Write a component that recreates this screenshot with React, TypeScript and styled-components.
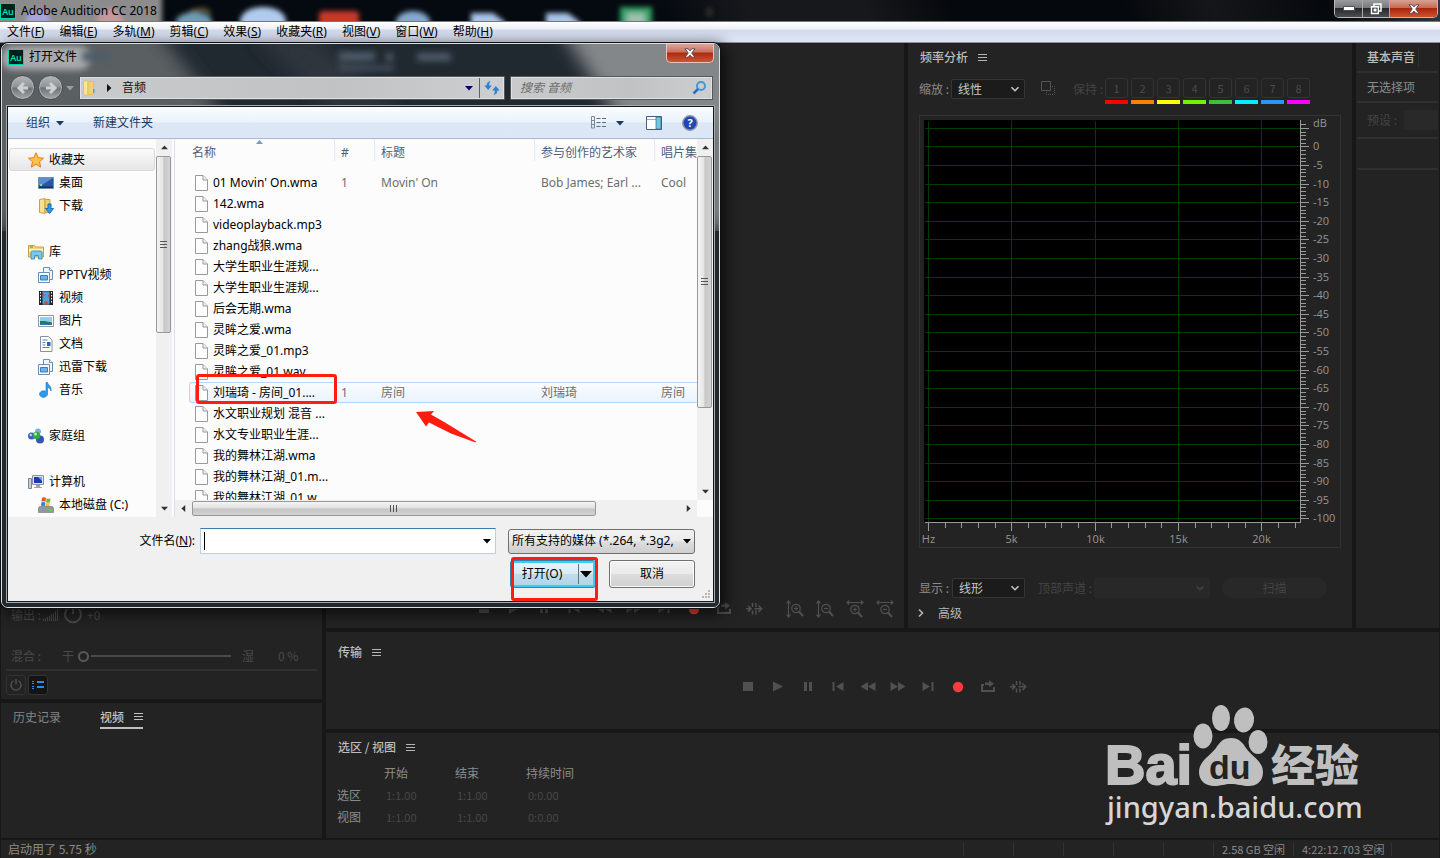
import React from "react";
import styled, { createGlobalStyle, css } from "styled-components";

const winFont = '"Noto Sans", "Noto Sans CJK SC", sans-serif';
const appFont = '"Noto Sans CJK SC", sans-serif';

const Global = createGlobalStyle`
  * { box-sizing: border-box; }
  body { margin: 0; background: #171717; font-family: ${winFont}; font-size: 12px; line-height: 16px; }
  button, input, select { font: inherit; color: inherit; margin: 0; padding: 0; border: 0; background: none; border-radius: 0; }
  svg { display: block; flex: none; }
`;

/* ---------- application shell ---------- */
const Shell = styled.div`
  position: relative;
  display: flex;
  flex-direction: column;
  min-height: 100vh;
  overflow: hidden;
`;
const TitleBar = styled.header`
  position: relative;
  z-index: 0;
  display: flex;
  align-items: center;
  height: 21px;
  gap: 5px;
  flex: none;
  overflow: hidden;
  color: #000;
  background: linear-gradient(65deg, #050a10 46%, #16181c 52% 60%, #05080c 66% 78%, #14161a 84%, #05080c 92%, #34373a);
`;
const Backdrop = styled.svg`
  position: absolute;
  left: 0;
  top: 0;
  z-index: -1;
`;
const AppTitle = styled.h1`
  margin: 0;
  font-size: 12px;
  font-weight: 400;
  flex: 1;
`;
const WindowButtons = styled.div`
  display: flex;
  align-self: flex-start;
  height: 18px;
  margin-right: 2px;
  border: 1px solid #b8b8b8;
  border-top: 0;
  border-radius: 0 0 5px 5px;
  overflow: hidden;
`;
const WindowButton = styled.button<{ $w: number; $close?: boolean }>`
  width: ${(p) => p.$w}px;
  display: flex;
  align-items: center;
  justify-content: center;
  border-right: ${(p) => (p.$close ? 0 : "1px solid #a9a9a9")};
  background: ${(p) =>
    p.$close
      ? "linear-gradient(#d9a293, #c56a55 45%, #a8260c 50%, #cf5230)"
      : "linear-gradient(#9a9b9c, #77797a 45%, #26292c 50%, #4c4f52)"};
`;
const MenuBar = styled.nav`
  display: flex;
  gap: 15px;
  height: 22px;
  padding: 0 7px;
  flex: none;
  border-top: 1px solid #777;
  border-bottom: 1px solid #8d92a3;
  background: linear-gradient(#fff, #eef1f8 35%, #d3daec 40%, #dfe6f6);
`;
const MenuItem = styled.button`
  white-space: nowrap;
  color: #000;
`;

const Workspace = styled.main`
  display: flex;
  flex: 1;
  gap: 4px;
  padding: 0 1px;
  font-family: ${appFont};
  color: #9b9b9b;
`;
const Stack = styled.div<{ $w?: number }>`
  display: flex;
  flex-direction: column;
  gap: 4px;
  ${(p) => (p.$w ? css`width: ${p.$w}px; flex: none;` : css`flex: 1; min-width: 0;`)}
`;
const TopRow = styled.div`
  display: flex;
  flex: 1;
  gap: 4px;
`;
const Panel = styled.section<{ $w?: number; $h?: number; $end?: boolean }>`
  display: flex;
  flex-direction: column;
  justify-content: ${(p) => (p.$end ? "flex-end" : "flex-start")};
  background: #232323;
  min-width: 0;
  ${(p) => (p.$w ? css`width: ${p.$w}px; flex: none;` : p.$h ? css`min-height: ${p.$h}px; flex: none;` : css`flex: 1;`)}
`;
const PanelHead = styled.div<{ $h?: number }>`
  display: flex;
  align-items: center;
  gap: 9px;
  height: ${(p) => p.$h ?? 28}px;
  padding-left: 12px;
  flex: none;
`;
const PanelTitle = styled.h2`
  margin: 0;
  font-size: 12px;
  font-weight: 500;
  color: #bdbdbd;
  white-space: nowrap;
`;
const IconButton = styled.button`
  display: flex;
  align-items: center;
  justify-content: center;
  width: 10px;
  height: 20px;
  color: #b5b5b5;
`;
const TransportRow = styled.div<{ $right?: boolean }>`
  display: flex;
  justify-content: ${(p) => (p.$right ? "flex-end" : "center")};
  color: #505050;
  ${(p) => (p.$right ? css`padding: 0 4px 9px 0;` : css`padding-top: 5px;`)}
`;
const TransportButton = styled.button<{ $rec?: boolean; $gap?: boolean }>`
  display: flex;
  align-items: center;
  justify-content: center;
  width: 30px;
  height: 20px;
  margin-left: ${(p) => (p.$gap ? 11 : 0)}px;
  color: ${(p) => (p.$rec ? "#fb3b3b" : "inherit")};
`;

/* effects rack */
const RackRow = styled.div<{ $h: number }>`
  display: flex;
  align-items: center;
  height: ${(p) => p.$h}px;
  padding-left: 10px;
  color: #4a4a4a;
  font-size: 12px;
`;
const RackLabel = styled.span<{ $w: number }>`
  width: ${(p) => p.$w}px;
  flex: none;
  white-space: nowrap;
`;
const MixSlider = styled.input`
  appearance: none;
  width: 154px;
  height: 12px;
  margin: 0 10px 0 4px;
  background: linear-gradient(#4a4a4a, #4a4a4a) 13px 5px / 140px 2px no-repeat;
  &::-webkit-slider-thumb {
    appearance: none;
    width: 11px;
    height: 11px;
    border: 2px solid #585858;
    border-radius: 50%;
    background: #232323;
  }
`;
const RackFooter = styled.div`
  display: flex;
  gap: 2px;
  margin: 0 5px;
  padding: 4px 0;
  border-top: 2px solid #303030;
`;
const SquareButton = styled.button<{ $on?: boolean }>`
  width: 20px;
  height: 20px;
  display: flex;
  align-items: center;
  justify-content: center;
  border: 1px solid #343434;
  border-radius: 3px;
  background: ${(p) => (p.$on ? "#141414" : "#232323")};
  color: ${(p) => (p.$on ? "#2d8ceb" : "#555")};
`;
const Tabs = styled.div`
  display: flex;
  gap: 39px;
  padding: 3px 12px;
`;
const Tab = styled.button<{ $active?: boolean }>`
  display: flex;
  align-items: center;
  gap: 10px;
  height: 23px;
  color: ${(p) => (p.$active ? "#c4c4c4" : "#858585")};
  font-weight: ${(p) => (p.$active ? 500 : 400)};
  border-bottom: 2px solid ${(p) => (p.$active ? "#c0c0c0" : "transparent")};
`;

/* frequency analysis */
const ControlRow = styled.div<{ $h: number }>`
  display: flex;
  align-items: center;
  height: ${(p) => p.$h}px;
  padding-left: 11px;
  color: #8b8b8b;
  flex: none;
`;
const ControlLabel = styled.label<{ $w: number; $off?: boolean; $ml?: number }>`
  width: ${(p) => p.$w}px;
  margin-left: ${(p) => p.$ml ?? 0}px;
  flex: none;
  white-space: nowrap;
  color: ${(p) => (p.$off ? "#444" : "#8b8b8b")};
`;
const Dropdown = styled.div<{ $w: number; $off?: boolean }>`
  display: grid;
  align-items: center;
  width: ${(p) => p.$w}px;
  height: 20px;
  border: 1px solid ${(p) => (p.$off ? "#282828" : "#353535")};
  border-radius: 2px;
  background: ${(p) => (p.$off ? "#282828" : "#1b1b1b")};
  color: ${(p) => (p.$off ? "#444" : "#c6c6c6")};
  & > * { grid-area: 1 / 1; }
  & > svg { justify-self: end; margin-right: 4px; pointer-events: none; }
`;
const DarkSelect = styled.select`
  appearance: none;
  width: 100%;
  height: 18px;
  padding-left: 6px;
  color: inherit;
  opacity: 1;
`;
const Holds = styled.div`
  display: flex;
  gap: 3px;
`;
const HoldButton = styled.button<{ $c: string }>`
  display: flex;
  flex-direction: column;
  gap: 2px;
  width: 23px;
  margin-top: 5px;
  color: #4a4a4a;
  font-size: 11px;
  line-height: 18px;
  & > span { border: 1px solid #333; border-radius: 3px; width: 23px; height: 20px; }
  &::after { content: ""; height: 4px; width: 23px; background: ${(p) => p.$c}; }
`;
const Chart = styled.svg`
  margin: 9px 0 0 11px;
  font-family: "Open Sans", sans-serif;
  font-size: 11px;
`;
const ScanButton = styled.button`
  width: 105px;
  height: 20px;
  margin-left: 12px;
  border-radius: 10px;
  background: #282828;
  color: #444;
`;
const Expander = styled.button`
  display: flex;
  align-items: center;
  gap: 12px;
  height: 30px;
  padding-left: 8px;
  color: #b5b5b5;
`;
const Spacer = styled.div`
  flex: 1;
`;

/* essential sound */
const SoundRow = styled.div<{ $h: number; $off?: boolean }>`
  display: flex;
  align-items: center;
  height: ${(p) => p.$h}px;
  padding-left: 10px;
  margin: 0 1px;
  flex: none;
  border-bottom: 2px solid #303030;
  color: ${(p) => (p.$off ? "#444" : "#8b8b8b")};
  overflow: hidden;
  white-space: nowrap;
`;
const SoundTab = styled(PanelTitle)`
  padding: 2px 3px 2px 0;
  border-right: 1px solid #303030;
`;
const PresetSelect = styled.select`
  appearance: none;
  flex: 1;
  height: 20px;
  margin-left: 7px;
  background: #292929;
  opacity: 1;
`;

/* selection table */
const RangeTable = styled.table`
  border-collapse: collapse;
  table-layout: fixed;
  width: 300px;
  margin-left: 11px;
  font-size: 11px;
  th { padding: 1px 0 0; height: 22px; text-align: left; font-weight: 400; font-size: 12px; color: #8b8b8b; }
  td { padding: 2px 0 0 2px; color: #484848; }
`;
const StatusBar = styled.footer`
  display: flex;
  align-items: center;
  height: 20px;
  margin: 0 1px;
  padding-left: 7px;
  border-top: 2px solid #171717;
  background: #232323;
  color: #8b8b8b;
  font-family: ${appFont};
  flex: none;
`;
const StatusText = styled.span`
  flex: 1;
`;
const StatusCell = styled.span<{ $w: number }>`
  width: ${(p) => p.$w}px;
  height: 13px;
  padding-left: 8px;
  border-left: 1px solid #333;
  font-size: 11px;
  line-height: 13px;
  white-space: nowrap;
`;

/* ---------- open dialog ---------- */
const Dialog = styled.div`
  position: absolute;
  left: 1px;
  top: 43px;
  width: 719px;
  height: 565px;
  display: flex;
  flex-direction: column;
  padding: 0 5px 5px;
  border: 1px solid #dcdfe2;
  border-radius: 7px;
  overflow: hidden;
  background: #202830;
`;
const DialogShade = styled.div`
  position: absolute;
  left: 1px;
  top: 43px;
  width: 719px;
  height: 565px;
  border-radius: 7px;
  box-shadow: 0 0 0 1px #111, 3px 3px 14px 3px rgba(0, 0, 0, 0.6);
`;
const Glass = styled.svg`
  position: absolute;
  left: 0;
  top: 0;
`;
const DialogTitle = styled.div`
  position: relative;
  display: flex;
  align-items: flex-start;
  height: 31px;
  gap: 5px;
  flex: none;
  color: #000;
  & > svg { margin: 5px 0 0 1px; }
`;
const DialogName = styled.h2`
  margin: 0;
  padding-top: 5px;
  font-size: 12px;
  font-weight: 400;
  flex: 1;
`;
const CloseButton = styled.button`
  display: flex;
  align-items: center;
  justify-content: center;
  width: 48px;
  height: 19px;
  border: 1px solid #e3c4bd;
  border-top: 0;
  border-radius: 0 0 5px 5px;
  background: linear-gradient(#dba79b, #c9705c 45%, #ab2a10 50%, #cc5637);
`;
const AddressRow = styled.div`
  position: relative;
  display: flex;
  align-items: center;
  gap: 5px;
  height: 25px;
  flex: none;
  padding: 0 1px 0 3px;
`;
const BackForward = styled.div`
  display: flex;
  align-items: center;
  gap: 3px;
  width: 64px;
  flex: none;
`;
const RoundButton = styled.button`
  width: 25px;
  height: 25px;
  display: flex;
  align-items: center;
  justify-content: center;
  border: 1px solid #4c5055;
  border-radius: 50%;
  background: linear-gradient(#b4b7ba, #8f9397 48%, #6d7277 52%, #a4a8ab);
  box-shadow: inset 0 0 0 1px #aeb2b5;
`;
const AddressBox = styled.div<{ $w?: number }>`
  display: flex;
  align-items: center;
  height: 24px;
  border: 1px solid #55585b;
  outline: 1px solid #e0e1e2;
  outline-offset: -2px;
  background: linear-gradient(90deg, #c9cacb, #c0c2c3 60%, #cdcecf);
  ${(p) => (p.$w ? css`width: ${p.$w}px; flex: none;` : css`flex: 1;`)}
  color: #111;
`;
const CrumbButton = styled.button`
  flex: 1;
  text-align: left;
  padding-left: 9px;
`;
const RefreshButton = styled.button`
  width: 25px;
  height: 22px;
  display: flex;
  align-items: center;
  justify-content: center;
  margin-left: 6px;
  border-left: 1px solid #5e6164;
`;
const SearchInput = styled.input`
  flex: 1;
  min-width: 0;
  padding-left: 9px;
  outline: 0;
  &::placeholder { color: #6a6c6e; font-style: italic; opacity: 1; }
`;
const Client = styled.div`
  position: relative;
  display: flex;
  flex-direction: column;
  flex: 1;
  margin-top: 6px;
  border: 1px solid #15181b;
  outline: 1px solid #a5a9ac;
  background: #f0f0f0;
  color: #000;
`;
const Toolbar = styled.div`
  display: flex;
  align-items: center;
  height: 32px;
  padding: 0 15px 0 18px;
  border-bottom: 1px solid #a9b9d3;
  background: linear-gradient(#fafdff, #eaf2fb 48%, #dce6f4 52%, #dde8f6);
  color: #1e395b;
  flex: none;
`;
const ToolButton = styled.button<{ $ml?: number }>`
  display: flex;
  align-items: center;
  gap: 6px;
  margin-left: ${(p) => p.$ml ?? 0}px;
`;
const Browser = styled.div`
  display: flex;
  height: 378px;
  flex: none;
  background: #fcfcfc;
`;
const Tree = styled.ul`
  list-style: none;
  margin: 0;
  padding: 9px 0 0 1px;
  width: 148px;
  flex: none;
  overflow: hidden;
`;
const TreeItem = styled.li`
  height: 23px;
`;
const TreeButton = styled.button<{ $level: number; $sel?: boolean }>`
  display: flex;
  align-items: center;
  gap: 5px;
  width: 146px;
  height: 23px;
  padding-left: ${(p) => (p.$level ? 28 : 18)}px;
  border: 1px solid ${(p) => (p.$sel ? "#d9d9d9" : "transparent")};
  border-radius: 3px;
  background: ${(p) => (p.$sel ? "linear-gradient(#fafafa, #e6e6e6)" : "none")};
  white-space: nowrap;
`;
const ScrollTrack = styled.div<{ $h?: boolean }>`
  display: flex;
  flex-direction: ${(p) => (p.$h ? "row" : "column")};
  justify-content: space-between;
  background: #f0f0f0;
  flex: none;
  ${(p) => (p.$h ? css`height: 17px; width: 522px;` : css`width: 16px;`)}
`;
const ScrollArrow = styled.button`
  display: flex;
  align-items: center;
  justify-content: center;
  width: 17px;
  height: 17px;
  color: #333;
`;
const ScrollThumb = styled.div<{ $size: number; $h?: boolean }>`
  display: flex;
  align-items: center;
  justify-content: center;
  border: 1px solid #989898;
  border-radius: 2px;
  color: #555;
  margin-right: auto;
  ${(p) =>
    p.$h
      ? css`width: ${p.$size}px; height: 15px; margin-top: 1px; background: linear-gradient(#f5f5f5, #e0e0e0 48%, #c4c4c4 52%, #d2d2d2);`
      : css`height: ${p.$size}px; width: 15px; margin-bottom: auto; background: linear-gradient(90deg, #f5f5f5, #e3e3e3 48%, #c6c6c6 52%, #d4d4d4);`}
`;
const FileArea = styled.div`
  display: flex;
  flex-direction: column;
  flex: 1;
  min-width: 0;
  margin-left: 2px;
  border-left: 1px solid #d5e1f2;
`;
const FileRow = styled.div`
  display: flex;
  height: 361px;
  flex: none;
`;
const FileScroll = styled.div`
  flex: 1;
  min-width: 0;
  padding-left: 14px;
  overflow: hidden;
`;
const FileTable = styled.table`
  width: 560px;
  table-layout: fixed;
  border-collapse: separate;
  border-spacing: 0;
  white-space: nowrap;
`;
const HeadCell = styled.th`
  height: 33px;
  padding: 0;
  vertical-align: top;
  text-align: left;
  font-weight: 400;
  color: #4c607a;
`;
const HeadLabel = styled.div<{ $first?: boolean; $last?: boolean }>`
  height: 22px;
  padding: 6px 0 0 ${(p) => (p.$first ? 3 : 6)}px;
  border-right: 1px solid ${(p) => (p.$last ? "transparent" : "#dfe9f6")};
`;
const SortMark = styled.svg`
  position: absolute;
  left: 248px;
  top: 33px;
`;
const FileTr = styled.tr<{ $hot?: boolean }>`
  td {
    height: 21px;
    padding: 0 0 0 6px;
    color: #6d6d6d;
    border: solid transparent;
    border-width: 1px 0;
    ${(p) => p.$hot && css`border-color: #b8d6fb; background: linear-gradient(#fafcff, #ebf3fd);`}
  }
  td:first-child {
    color: #000;
    ${(p) => p.$hot && css`box-shadow: inset 1px 0 #b8d6fb; border-radius: 3px 0 0 3px;`}
  }
`;
const FileName = styled.span`
  display: flex;
  align-items: center;
  gap: 5px;
  height: 19px;
  width: 140px;
`;
const Footer = styled.div`
  display: flex;
  flex-direction: column;
  gap: 6px;
  padding: 11px 18px 0 0;
  align-items: flex-end;
`;
const FooterRow = styled.div`
  display: flex;
  align-items: center;
`;
const Combo = styled.div`
  display: flex;
  align-items: center;
  width: 296px;
  height: 26px;
  margin: 0 12px 0 5px;
  padding-right: 4px;
  border: 1px solid #b4d2e6;
  border-top-color: #3d7bad;
  background: #fff;
`;
const Caret = styled.span`
  width: 1px;
  height: 18px;
  margin-left: 3px;
  background: #000;
`;
const NameInput = styled.input`
  flex: 1;
  min-width: 0;
  outline: 0;
`;
const TypeBox = styled.div`
  display: grid;
  align-items: center;
  width: 187px;
  height: 25px;
  border: 1px solid #707070;
  border-radius: 3px;
  background: linear-gradient(#f2f2f2, #ebebeb 48%, #dddddd 52%, #cfcfcf);
  & > * { grid-area: 1 / 1; }
  & > svg { justify-self: end; margin-right: 3px; pointer-events: none; }
`;
const TypeSelect = styled.select`
  appearance: none;
  width: 100%;
  height: 23px;
  padding: 0 20px 0 3px;
`;
const DialogButton = styled.button`
  width: 86px;
  height: 28px;
  margin-left: 13px;
  border: 1px solid #707070;
  border-radius: 3px;
  box-shadow: inset 0 0 0 1px #fbfbfb;
  background: linear-gradient(#f2f2f2, #ebebeb 48%, #dddddd 52%, #cfcfcf);
`;
const SplitButton = styled.div`
  display: flex;
  width: 86px;
  height: 28px;
  border: 1px solid #2c84ad;
  border-radius: 3px;
  box-shadow: inset 0 0 0 2px #39cdf5;
  background: linear-gradient(#eaf6fb, #d8ebf4 48%, #bfdcea 52%, #b2d4e6);
`;
const OpenButton = styled.button`
  flex: 1;
  padding-right: 5px;
`;
const OpenMore = styled.button`
  display: flex;
  align-items: center;
  justify-content: center;
  width: 17px;
  margin: 3px 0;
  padding-right: 2px;
  border-left: 1px solid #60747e;
`;
const Grip = styled.svg`
  position: absolute;
  right: 2px;
  bottom: 2px;
`;
const Marker = styled.div<{ $x: number; $y: number; $w: number; $h: number }>`
  position: absolute;
  left: ${(p) => p.$x}px;
  top: ${(p) => p.$y}px;
  width: ${(p) => p.$w}px;
  height: ${(p) => p.$h}px;
  border: 3px solid #ff1d12;
  border-radius: 3px;
  pointer-events: none;
`;
const ArrowMark = styled.svg`
  position: absolute;
  left: 408px;
  top: 304px;
  pointer-events: none;
`;
const Watermark = styled.svg`
  position: absolute;
  right: 74px;
  bottom: 28px;
  pointer-events: none;
`;

/* ---------- icons ---------- */
const AuLogo = () => (
  <svg width="16" height="16" viewBox="0 0 16 16">
    <rect x="0.5" y="0.5" width="15" height="15" fill="#00201c" stroke="#00d6b0" />
    <text x="8" y="12" textAnchor="middle" fontFamily="Open Sans, sans-serif" fontSize="9" fontWeight="600" fill="#00e4bb">Au</text>
  </svg>
);
const Burger = () => (
  <svg width="9" height="7" viewBox="0 0 9 7" fill="currentColor"><path d="M0 0h9v1H0zM0 3h9v1H0zM0 6h9v1H0z" /></svg>
);
const Triangle = ({ w = 7, dir = "down", fill = "currentColor" }: { w?: number; dir?: string; fill?: string }) => {
  const turn: Record<string, number> = { down: 0, left: 90, up: 180, right: 270 };
  return (
    <svg width={w} height={w} viewBox="0 0 8 8" fill={fill}><path transform={`rotate(${turn[dir]} 4 4)`} d="M0 2h8L4 6.4z" /></svg>
  );
};
const CloseGlyph = () => (
  <svg width="12" height="10" viewBox="0 0 12 10">
    <path d="M1 .8h3.2L6 2.9 7.800 .8H11L7.700 5 11 9.200H7.800L6 7.100 4.200 9.200H1L4.300 5z" fill="#fff" stroke="#5a4a52" />
  </svg>
);
const Chevron = ({ right }: { right?: boolean }) => (
  <svg width="10" height="10" viewBox="0 0 10 10" fill="none" stroke="currentColor" strokeWidth="1.600">
    <path d={right ? "M3 1.500 6.500 5 3 8.500" : "M1.500 3.200 5 6.700 8.500 3.200"} />
  </svg>
);
const Grips = ({ h }: { h?: boolean }) => (
  <svg width="8" height="8" viewBox="0 0 8 8" fill="currentColor">
    <path d={h ? "M0 0h1v7H0zM3 0h1v7H3zM6 0h1v7H6z" : "M0 0h7v1H0zM0 3h7v1H0zM0 6h7v1H0z"} />
  </svg>
);
const FileIcon = () => (
  <svg width="13" height="16" viewBox="0 0 13 16">
    <path d="M.5.5h7.500l4.500 4.500v10.500H.5z" fill="#fdfdfd" stroke="#999" />
    <path d="M8 .5V5h4.500" fill="#f0f0f0" stroke="#999" />
  </svg>
);

const transportShapes: Record<string, React.ReactNode> = {
  stop: <path d="M4 4h10v9H4z" />,
  play: <path d="M4 3.500 14 8.500 4 13.500z" />,
  pause: <path d="M5 4h3v9H5zM10 4h3v9h-3z" />,
  prev: <path d="M3.500 4h2v9h-2zM14.500 4v9L7 8.500z" />,
  rewind: <path d="M9 4v9L1.500 8.500zM16.500 4v9L9 8.500z" />,
  forward: <path d="M1.500 4v9L9 8.500zM9 4v9l7.500-4.500z" />,
  next: <path d="M3.500 4v9L11 8.500zM12.500 4h2v9h-2z" />,
  record: <circle cx="9" cy="9" r="5.200" />,
  loop: <path d="M2 6h3v2H4v4h10V9h2v5H2zM6 4.500h4V2l5 3.700-5 3.600V7H6z" />,
  skip: (
    <g fill="none" stroke="currentColor" strokeWidth="1.500">
      <path d="M1 8.800h4M3.200 6 6 8.800 3.200 11.600" />
      <path d="M7.500 3v4M7.500 10.500v4M11 3v4M11 10.500v4" />
      <path d="M9.500 8.800h7M13.500 5.500l3.200 3.300-3.200 3.300" />
    </g>
  ),
};
const zoomShape = (plus: boolean, horizontal: boolean) => (
  <g fill="none" stroke="currentColor" strokeWidth="1.200">
    {horizontal ? (
      <path d="M1 2.500h16M3.200.5 1 2.500l2.200 2M14.800.5l2.200 2-2.200 2" />
    ) : (
      <path d="M2.500 1v16M.5 3.500l2-2.500 2 2.500M.5 14.500l2 2.500 2-2.500" />
    )}
    <g transform={horizontal ? "translate(-1 2)" : "translate(0 1)"}>
      <circle cx="10" cy="7.500" r="4.200" />
      <path d={plus ? "M8 7.500h4M10 5.500v4" : "M8 7.500h4"} />
      <path d="m13 10.500 4 4.500" strokeWidth="2" />
    </g>
  </g>
);
const transportNames = ["stop", "play", "pause", "prev", "rewind", "forward", "next", "record", "loop", "skip"];

const Transport = ({ zoom }: { zoom?: boolean }) => (
  <TransportRow $right={zoom}>
    {transportNames.map((n) => (
      <TransportButton key={n} $rec={n === "record"} aria-label={n}>
        <svg width="18" height="18" viewBox="0 0 18 18" fill="currentColor">{transportShapes[n]}</svg>
      </TransportButton>
    ))}
    {zoom &&
      [0, 1, 2, 3].map((i) => (
        <TransportButton key={i} $gap={i === 0} aria-label={`zoom ${i}`}>
          <svg width="18" height="18" viewBox="0 0 18 18">{zoomShape(i % 2 === 0, i > 1)}</svg>
        </TransportButton>
      ))}
  </TransportRow>
);

const library = (
  <>
    <path d="M5.500.5h6l3 3v9h-9z" fill="#eef5fb" stroke="#6a8fb5" />
    <path d="M11.500.5v3h3" fill="#fff" stroke="#6a8fb5" />
    <path d="M.5 5.500h11v10H.5z" fill="#f5fafe" stroke="#6a8fb5" />
    <path d="M2.500 8.500h7v4.500h-7z" fill="#6fb1e6" stroke="#3a7cc0" />
  </>
);
const treeIcons: Record<string, React.ReactNode> = {
  star: <path d="m8 .8 2.200 4.900 5.300.5-4 3.600 1.200 5.300L8 12.300l-4.700 2.800 1.200-5.300-4-3.600 5.300-.5z" fill="#ffc04a" stroke="#e07b1c" />,
  desktop: (
    <>
      <path d="M.5 2.500h15v11H.5z" fill="#2857a8" stroke="#6f8fae" />
      <path d="M1 3h14L4 10H1z" fill="#5a8ed2" />
      <path d="M1 11.500h14V13H1z" fill="#1d2f4d" />
      <path d="M2 9h2v2H2z" fill="#7fdc7a" />
    </>
  ),
  download: (
    <>
      <path d="M1.500 1.500 7 .5v15l-5.500-1z" fill="#f7e08f" stroke="#c8a144" />
      <path d="M7 1.500h5v13H7z" fill="#f0cf6c" stroke="#c8a144" />
      <path d="M10 6h3v4.500h2.500L11.500 15.500 7.500 10.500H10z" fill="#2f9be8" stroke="#1a68b0" />
    </>
  ),
  libraries: (
    <>
      <path d="M.5 1.500h6l1 1.500h8v10H.5z" fill="#f2d475" stroke="#c8a144" />
      <path d="M1 5h14v3H1z" fill="#fdf2bd" />
      <path d="M3 15V8.500q0-1.500 1.500-1.500h8q1.500 0 1.500 1.500V15h-3.500v-3.500h-4V15z" fill="#7cc7ec" stroke="#4294c4" />
      <path d="M2 2.500h3v1H2z" fill="#37a637" />
    </>
  ),
  library,
  video: (
    <>
      <path d="M1 1h14v14H1z" fill="#20262c" />
      <path d="M4.500 1.500h7v13h-7z" fill="#4f9fe0" />
      <path d="m4.500 3 2.500 2-2.500 2.500zM11.500 3v5L9.500 6zM5 14.500l3-4 3.500 4z" fill="#b9533b" />
      <path d="M2 2h1v1.500H2zM2 5h1v1.500H2zM2 8h1v1.500H2zM2 11h1v1.500H2zM13 2h1v1.500h-1zM13 5h1v1.500h-1zM13 8h1v1.500h-1zM13 11h1v1.500h-1z" fill="#fff" />
    </>
  ),
  picture: (
    <>
      <path d="M.5 2.500h15v11H.5z" fill="#fff" stroke="#8a98a5" />
      <path d="M2 4h12v8H2z" fill="#8fd0f2" />
      <path d="M2 8 7 8l7 1.500V12H2z" fill="#217a5c" />
      <path d="M2 10.500h12V12H2z" fill="#2d6fb5" />
    </>
  ),
  doc: (
    <>
      <path d="M2.500.5h8l3.500 3.500v11.500H2.500z" fill="#fff" stroke="#8793a3" />
      <path d="M4.500 4h5M4.500 6.500h3M4.500 9h3M4.500 11.500h7" stroke="#5b7fb5" />
      <path d="M9 6h3.500v4H9z" fill="#2a62b8" />
    </>
  ),
  music: <path d="M8 .5h1.500c.3 2.500 4.500 3.500 3.500 8.500-.4-2-1.800-3.300-3.500-3.500V12a4 3.300 0 1 1-1.500-2.500z" fill="#2d9bea" stroke="#1c73bb" strokeWidth=".6" />,
  group: (
    <>
      <circle cx="10" cy="3.500" r="3" fill="#7fb2e0" />
      <circle cx="3.500" cy="8" r="3.500" fill="#3a63c4" />
      <circle cx="12" cy="11.500" r="4" fill="#2f55b5" />
      <circle cx="8.500" cy="7.500" r="3.800" fill="#36a845" />
      <circle cx="7.500" cy="6" r="1.500" fill="#b5f0ac" />
      <circle cx="2.800" cy="7" r="1.200" fill="#bcd2ff" />
    </>
  ),
  computer: (
    <>
      <path d="M.5 4.500h3v10h-3z" fill="#c9ced3" stroke="#7d858c" />
      <path d="M4.500 1.500h11v9h-11z" fill="#dfe3e7" stroke="#8b939b" />
      <path d="M6 3h8v6H6z" fill="#1d34c8" />
      <path d="M10 3h4v4z" fill="#7d9bff" />
      <path d="M8 11h4v2h2v1H6v-1h2z" fill="#9aa2aa" />
    </>
  ),
  disk: (
    <>
      <path d="M4 .8q2-1 4 0l-.5 4q-2-1-4 0z" fill="#e3562b" />
      <path d="M8.500 1.200q2 1 4 0l-.5 4q-2 1-4 0z" fill="#74b843" />
      <path d="M3.300 5.500q2-1 4 0L7 9.200q-2-1-4 0z" fill="#3a7ed6" />
      <path d="M7.800 5.800q2 1 4 0l-.5 3.700q-2 1-4 0z" fill="#f5c22e" />
      <path d="M1.500 9.500h13l1.200 2v4H.3v-4z" fill="#8f979c" stroke="#6c747a" strokeWidth=".6" />
      <path d="M11 12.500h3v1.500h-3z" fill="#49e04b" />
    </>
  ),
};

const tree: { icon: string; label: string; level: number; sel?: boolean }[] = [
  { icon: "star", label: "收藏夹", level: 0, sel: true },
  { icon: "desktop", label: "桌面", level: 1 },
  { icon: "download", label: "下载", level: 1 },
  { icon: "", label: "", level: 0 },
  { icon: "libraries", label: "库", level: 0 },
  { icon: "library", label: "PPTV视频", level: 1 },
  { icon: "video", label: "视频", level: 1 },
  { icon: "picture", label: "图片", level: 1 },
  { icon: "doc", label: "文档", level: 1 },
  { icon: "library", label: "迅雷下载", level: 1 },
  { icon: "music", label: "音乐", level: 1 },
  { icon: "", label: "", level: 0 },
  { icon: "group", label: "家庭组", level: 0 },
  { icon: "", label: "", level: 0 },
  { icon: "computer", label: "计算机", level: 0 },
  { icon: "disk", label: "本地磁盘 (C:)", level: 1 },
];

const files: string[][] = [
  ["01 Movin' On.wma", "1", "Movin' On", "Bob James; Earl ...", "Cool"],
  ["142.wma"],
  ["videoplayback.mp3"],
  ["zhang战狼.wma"],
  ["大学生职业生涯规..."],
  ["大学生职业生涯规..."],
  ["后会无期.wma"],
  ["灵眸之爱.wma"],
  ["灵眸之爱_01.mp3"],
  ["灵眸之爱_01.wav"],
  ["刘瑞琦 - 房间_01....", "1", "房间", "刘瑞琦", "房间"],
  ["水文职业规划 混音 ..."],
  ["水文专业职业生涯..."],
  ["我的舞林江湖.wma"],
  ["我的舞林江湖_01.m..."],
  ["我的舞林江湖_01.w..."],
];

const menus = [
  ["文件", "F"], ["编辑", "E"], ["多轨", "M"], ["剪辑", "C"], ["效果", "S"],
  ["收藏夹", "R"], ["视图", "V"], ["窗口", "W"], ["帮助", "H"],
];
const holdColors = ["#ff0000", "#ff8000", "#ffff00", "#72f200", "#3fbf3f", "#00f0ff", "#2b95ff", "#ff00ff"];

/* desktop icons and wallpaper seen through the glass frames */
const DesktopBlur = () => (
  <Backdrop width="720" height="21" viewBox="0 0 720 21">
    <defs><filter id="soft" x="-30%" y="-60%" width="160%" height="220%"><feGaussianBlur stdDeviation="2.500" /></filter></defs>
    <g filter="url(#soft)">
      <rect x="-20" y="-6" width="182" height="36" fill="#8c8c8c" />
      <circle cx="38" cy="22" r="12" fill="#a7a5d8" />
      <circle cx="110" cy="22" r="13" fill="#c3999b" />
      <ellipse cx="194" cy="22" rx="18" ry="10" fill="#6f9db5" />
      <path d="M190 12q16-6 20 2" stroke="#7d6a2c" strokeWidth="3" fill="none" />
      <ellipse cx="263" cy="21" rx="23" ry="14" fill="#b0cbee" />
      <rect x="319" y="11" width="40" height="16" rx="4" fill="#c8382a" />
      <ellipse cx="413" cy="22" rx="17" ry="11" fill="#86a8cc" />
      <path d="M471 26V13h22l12 9v6zM546 26V13h22l12 9v6z" fill="#a9c4ea" />
      <rect x="620" y="7" width="32" height="22" fill="#30a066" />
      <rect x="627" y="13" width="18" height="14" fill="#9cc0ac" />
      <rect x="707" y="8" width="5" height="8" fill="#3a3632" />
    </g>
  </Backdrop>
);
const GlassBlur = () => (
  <Glass width="719" height="565" viewBox="0 0 719 565">
    <defs>
      <filter id="haze" x="-30%" y="-60%" width="160%" height="220%"><feGaussianBlur stdDeviation="9" /></filter>
      <filter id="near" x="-30%" y="-60%" width="160%" height="220%"><feGaussianBlur stdDeviation="3" /></filter>
    </defs>
    <path d="M-20-20H150L220 70 180 160H20V186H-20z" fill="#5a5e62" filter="url(#haze)" />
    <path d="M250-10h60l90 80h-70z" fill="#2d353d" filter="url(#haze)" />
    <path d="M555-20H740V186H705V80H620z" fill="#84878a" filter="url(#haze)" />
    <rect x="0" y="2" width="88" height="24" rx="10" fill="#a9aaab" filter="url(#near)" />
    <g fill="#4d5c69" filter="url(#near)">
      <path d="M80 8h28v9H80zM337 8h36v9h-36zM384 9h7v8h-7zM415 9h34v8h-34zM337 22h55v4h-55z" />
    </g>
    <path d="M0 187h6v378H0zM712 187h7v378h-7z" fill="#202830" />
  </Glass>
);

const FrequencyChart = () => {
  const y = (i: number) => Math.round(12.800 + i * 18.600) + 0.5;
  const x = (i: number) => Math.round(9 + i * 16.660) + 0.5;
  const majors = Array.from({ length: 22 }, (_, i) => i);
  return (
    <Chart width="422" height="433" viewBox="0 0 422 433">
      <rect x="0.5" y="0.5" width="421" height="432" fill="none" stroke="#333" />
      <rect x="5" y="5" width="377" height="402" fill="#000" />
      <g stroke="#003c00">
        {majors.map((i) => <path key={i} d={`M6 ${y(i)}H381`} />)}
        {[0, 5, 10, 15, 20].map((i) => <path key={i} d={`M${x(i)} 6V407`} />)}
      </g>
      <g stroke="#9a9a9a">
        <path d="M381.500 5v403M6 407.500h376" />
        {Array.from({ length: 107 }, (_, i) => i - 1).map((i) => {
          const p = Math.round(12.800 + i * 3.720) + 0.5;
          return <path key={i} d={`M382 ${p}h${i % 5 === 0 ? 8 : 5}`} />;
        })}
        {Array.from({ length: 23 }, (_, i) => (
          <path key={i} d={`M${x(i)} 408v${i % 5 === 0 ? 8 : 5}`} />
        ))}
      </g>
      <g fill="#969696">
        <text x="394" y="12">dB</text>
        {majors.slice(1).map((i) => <text key={i} x="394" y={y(i) + 3}>{i === 1 ? "0" : `-${(i - 1) * 5}`}</text>)}
        {["Hz", "5k", "10k", "15k", "20k"].map((t, i) => (
          <text key={t} x={x(i * 5)} y="428" textAnchor="middle">{t}</text>
        ))}
      </g>
    </Chart>
  );
};

const OpenDialog = () => (
  <Dialog role="dialog" aria-label="打开文件">
    <GlassBlur />
    <DialogTitle>
      <AuLogo />
      <DialogName>打开文件</DialogName>
      <CloseButton aria-label="关闭"><CloseGlyph /></CloseButton>
    </DialogTitle>
    <AddressRow>
      <BackForward>
        {["M11 2 6 7l5 5M6 7h9", "M9 2l5 5-5 5M14 7H5"].map((d, i) => (
          <RoundButton key={d} aria-label={i ? "前进" : "后退"}>
            <svg width="20" height="14" viewBox="0 0 20 14" fill="none" stroke="#cdd0d2" strokeWidth="3"><path d={d} /></svg>
          </RoundButton>
        ))}
        <Triangle w={8} fill="#9a9ea2" />
      </BackForward>
      <AddressBox>
        <svg width="16" height="16" viewBox="0 0 16 16">
          <path d="M3.500 1.500 8 .5v15l-4.500-1z" fill="#f8e39a" stroke="#e0c264" />
          <path d="M8 1.500h5.500v13H8z" fill="#f0d070" stroke="#e0c264" />
          <path d="M13 9h1.500v4H13z" fill="#4aa3df" />
        </svg>
        <ToolButton $ml={9} aria-label="展开"><Triangle w={8} dir="right" /></ToolButton>
        <CrumbButton>音频</CrumbButton>
        <ToolButton aria-label="历史"><Triangle w={8} fill="#00006a" /></ToolButton>
        <RefreshButton aria-label="刷新">
          <svg width="16" height="14" viewBox="0 0 16 14" fill="#2d80cf">
            <path d="M6.500 0Q4.800 2 5.200 4.500h2.600L4.200 9 .3 4.500h2.300Q2.800.5 6.500 0z" />
            <path d="M9.500 14q1.700-2 1.300-4.500H8.200L11.800 5l3.900 4.500h-2.300q-.2 4-3.900 4.500z" />
          </svg>
        </RefreshButton>
      </AddressBox>
      <AddressBox $w={203}>
        <SearchInput placeholder="搜索 音频" aria-label="搜索 音频" />
        <svg width="20" height="14" viewBox="0 0 20 14" fill="none" stroke="#2a6fc4" strokeWidth="2">
          <circle cx="9" cy="5" r="4" stroke="#3f9ad8" />
          <path d="M6 8 1.500 12.500" strokeWidth="2.500" />
        </svg>
      </AddressBox>
    </AddressRow>
    <Client>
      <Toolbar>
        <ToolButton>组织<Triangle w={8} /></ToolButton>
        <ToolButton $ml={29}>新建文件夹</ToolButton>
        <Spacer />
        <ToolButton aria-label="视图">
          <svg width="15" height="13" viewBox="0 0 15 13" fill="none" stroke="#5a6f8c">
            <path d="M.5.5h3v11.500h-3zM.5 4.500h3M.5 8.500h3" stroke="#7d8896" />
            <path d="M5.500 2.500h4M11 2.500h4M5.500 6.500h4M11 6.500h4M5.500 10.500h4M11 10.500h4" />
          </svg>
        </ToolButton>
        <ToolButton $ml={10} aria-label="更多视图"><Triangle w={8} /></ToolButton>
        <ToolButton $ml={22} aria-label="预览窗格">
          <svg width="16" height="14" viewBox="0 0 16 14">
            <path d="M.5.5h15v13H.5z" fill="#fff" stroke="#44607f" />
            <path d="M1 3.500h9" stroke="#9db0c4" />
            <path d="M10 1h5v12h-5z" fill="#6fc6e0" stroke="#44607f" strokeWidth=".7" />
          </svg>
        </ToolButton>
        <ToolButton $ml={20} aria-label="帮助">
          <svg width="16" height="16" viewBox="0 0 16 16">
            <circle cx="8" cy="8" r="7.200" fill="#1f46b4" stroke="#8d93a6" strokeWidth="1.500" />
            <text x="8" y="12" textAnchor="middle" fontSize="11" fontWeight="700" fill="#fff">?</text>
          </svg>
        </ToolButton>
      </Toolbar>
      <Browser>
        <Tree>
          {tree.map((t, i) => (
            <TreeItem key={i}>
              {t.label && (
                <TreeButton $level={t.level} $sel={t.sel}>
                  <svg width="16" height="16" viewBox="0 0 16 16">{treeIcons[t.icon]}</svg>
                  {t.label}
                </TreeButton>
              )}
            </TreeItem>
          ))}
        </Tree>
        <ScrollTrack>
          <ScrollArrow aria-label="向上"><Triangle dir="up" /></ScrollArrow>
          <ScrollThumb $size={177}><Grips /></ScrollThumb>
          <ScrollArrow aria-label="向下"><Triangle /></ScrollArrow>
        </ScrollTrack>
        <FileArea>
          <FileRow>
            <FileScroll>
              <FileTable>
                <colgroup>
                  <col width="146" /><col width="40" /><col width="160" /><col width="120" /><col width="94" />
                </colgroup>
                <thead>
                  <tr>
                    {["名称", "#", "标题", "参与创作的艺术家", "唱片集"].map((h, i) => (
                      <HeadCell key={h}><HeadLabel $first={i === 0} $last={i === 4}>{h}</HeadLabel></HeadCell>
                    ))}
                  </tr>
                </thead>
                <tbody>
                  {files.map((f, i) => (
                    <FileTr key={i} $hot={i === 10}>
                      <td><FileName><FileIcon />{f[0]}</FileName></td>
                      {[1, 2, 3, 4].map((c) => <td key={c}>{f[c]}</td>)}
                    </FileTr>
                  ))}
                </tbody>
              </FileTable>
            </FileScroll>
            <ScrollTrack>
              <ScrollArrow aria-label="向上"><Triangle dir="up" /></ScrollArrow>
              <ScrollThumb $size={252}><Grips /></ScrollThumb>
              <ScrollArrow aria-label="向下"><Triangle /></ScrollArrow>
            </ScrollTrack>
          </FileRow>
          <ScrollTrack $h>
            <ScrollArrow aria-label="向左"><Triangle dir="left" /></ScrollArrow>
            <ScrollThumb $size={404} $h><Grips h /></ScrollThumb>
            <ScrollArrow aria-label="向右"><Triangle dir="right" /></ScrollArrow>
          </ScrollTrack>
        </FileArea>
      </Browser>
      <Footer>
        <FooterRow>
          <label htmlFor="file-name">文件名(<u>N</u>):</label>
          <Combo>
            <Caret />
            <NameInput id="file-name" />
            <Triangle w={8} />
          </Combo>
          <TypeBox>
            <TypeSelect aria-label="文件类型"><option>所有支持的媒体 (*.264, *.3g2,</option></TypeSelect>
            <Triangle w={8} />
          </TypeBox>
        </FooterRow>
        <FooterRow>
          <SplitButton>
            <OpenButton>打开(O)</OpenButton>
            <OpenMore aria-label="打开方式"><Triangle w={12} /></OpenMore>
          </SplitButton>
          <DialogButton>取消</DialogButton>
        </FooterRow>
      </Footer>
      <SortMark width="7" height="4" viewBox="0 0 7 4"><path d="M3.500 0 7 4H0z" fill="#6f9fc6" /></SortMark>
      <Marker $x={188} $y={267} $w={141} $h={30} />
      <Marker $x={503} $y={450} $w={87} $h={44} />
      <ArrowMark width="62" height="34" viewBox="0 0 62 34"><path d="M0 1 18 0l-3 3.500L29 11.500 60 30.500l-.5 1L35 22.500 13 11.500 10 15.500z" fill="#ff1d12" /></ArrowMark>
      <Grip width="10" height="10" viewBox="0 0 10 10" fill="#b8b8b8">
        <path d="M7 1h2v2H7zM4 4h2v2H4zM7 4h2v2H7zM1 7h2v2H1zM4 7h2v2H4zM7 7h2v2H7z" />
      </Grip>
    </Client>
  </Dialog>
);

export default function App() {
  return (
    <Shell>
      <Global />
      <TitleBar>
        <DesktopBlur />
        <AuLogo />
        <AppTitle>Adobe Audition CC 2018</AppTitle>
        <WindowButtons>
          <WindowButton $w={28} aria-label="最小化">
            <svg width="12" height="5" viewBox="0 0 12 5"><path d="M.5.5h11v4H.5z" fill="#fff" stroke="#4c4f5c" /></svg>
          </WindowButton>
          <WindowButton $w={27} aria-label="还原">
            <svg width="12" height="12" viewBox="0 0 12 12" fill="none" stroke="#fff" strokeWidth="1.500"><path d="M4 3V1h7v7H9M1.500 3.700h6.800v6.800H1.500zM4.300 6.300h1.500v1.500H4.300z" /></svg>
          </WindowButton>
          <WindowButton $w={47} $close aria-label="关闭"><CloseGlyph /></WindowButton>
        </WindowButtons>
      </TitleBar>
      <MenuBar>
        {menus.map(([name, key]) => <MenuItem key={name}>{name}(<u>{key}</u>)</MenuItem>)}
      </MenuBar>
      <Workspace>
        <Stack $w={321}>
          <Panel $end>
            <RackRow $h={20}>
              <RackLabel $w={32}>输出 :</RackLabel>
              <svg width="16" height="12" viewBox="0 0 16 12" stroke="currentColor"><path d="M.5 12v-2M2.500 12V9M4.500 12V8M6.500 12V7M8.500 12V5M10.500 12V4M12.500 12V2M14.500 12V0" /></svg>
              <svg width="28" height="20" viewBox="0 0 28 20" fill="none" stroke="currentColor" strokeWidth="2"><path d="M8.500 3.500a8 8 0 1 0 11 0M14 2v7" /></svg>
              +0
            </RackRow>
            <RackRow $h={21} />
            <RackRow $h={20}>
              <RackLabel $w={51}>混合 :</RackLabel>
              干
              <MixSlider type="range" defaultValue={0} aria-label="混合" />
              <RackLabel $w={36}>湿</RackLabel>
              0 %
            </RackRow>
            <RackRow $h={3} />
            <RackFooter>
              <SquareButton aria-label="电源">
                <svg width="12" height="12" viewBox="0 0 12 12" fill="none" stroke="currentColor" strokeWidth="1.300"><path d="M3.500 1.800a5 5 0 1 0 5 0M6 0v5.500" /></svg>
              </SquareButton>
              <SquareButton $on aria-label="列表">
                <svg width="12" height="8" viewBox="0 0 12 8" fill="currentColor"><path d="M0 0h2v1H0zM0 2h2v1H0zM5 0h7v2H5zM0 5h2v1H0zM0 7h2v1H0zM5 5h7v2H5z" /></svg>
              </SquareButton>
            </RackFooter>
          </Panel>
          <Panel $h={135}>
            <Tabs>
              <Tab>历史记录</Tab>
              <Tab $active>视频 <Burger /></Tab>
            </Tabs>
          </Panel>
        </Stack>
        <Stack>
          <TopRow>
            <Panel $end><Transport zoom /></Panel>
            <Panel $w={444}>
              <PanelHead><PanelTitle>频率分析</PanelTitle><IconButton aria-label="菜单"><Burger /></IconButton></PanelHead>
              <ControlRow $h={35}>
                <ControlLabel $w={32} htmlFor="scale">缩放 :</ControlLabel>
                <Dropdown $w={74}>
                  <DarkSelect id="scale"><option>线性</option></DarkSelect>
                  <Chevron />
                </Dropdown>
                <ToolButton $ml={16} aria-label="复制">
                  <svg width="15" height="15" viewBox="0 0 15 15" fill="none" stroke="#555"><path d="M.5.5h9v9h-9z" /><path d="M11 5.500h2.500v8h-8V11" strokeDasharray="1 1" /></svg>
                </ToolButton>
                <ControlLabel as="span" $w={32} $ml={17} $off>保持 :</ControlLabel>
                <Holds>
                  {holdColors.map((c, i) => <HoldButton key={c} $c={c}><span>{i + 1}</span></HoldButton>)}
                </Holds>
              </ControlRow>
              <FrequencyChart />
              <Spacer />
              <ControlRow $h={20}>
                <ControlLabel $w={33} htmlFor="display">显示 :</ControlLabel>
                <Dropdown $w={73}>
                  <DarkSelect id="display"><option>线形</option></DarkSelect>
                  <Chevron />
                </Dropdown>
                <ControlLabel $w={56} $ml={13} $off htmlFor="channel">顶部声道 :</ControlLabel>
                <Dropdown $w={116} $off>
                  <DarkSelect id="channel" disabled><option></option></DarkSelect>
                  <Chevron />
                </Dropdown>
                <ScanButton disabled>扫描</ScanButton>
              </ControlRow>
              <Expander><Chevron right /><span>高级</span></Expander>
            </Panel>
            <Panel $w={83}>
              <SoundRow $h={30}><SoundTab>基本声音</SoundTab></SoundRow>
              <SoundRow $h={30}>无选择项</SoundRow>
              <SoundRow $h={36} $off><label htmlFor="preset">预设 :</label><PresetSelect id="preset" disabled /></SoundRow>
              <SoundRow $h={31} />
            </Panel>
          </TopRow>
          <Panel $h={97}>
            <PanelHead $h={40}><PanelTitle>传输</PanelTitle><IconButton aria-label="菜单"><Burger /></IconButton></PanelHead>
            <Transport />
          </Panel>
          <Panel $h={105}>
            <PanelHead><PanelTitle>选区 / 视图</PanelTitle><IconButton aria-label="菜单"><Burger /></IconButton></PanelHead>
            <RangeTable>
              <colgroup><col width="47" /><col width="71" /><col width="71" /><col /></colgroup>
              <thead><tr><th /><th>开始</th><th>结束</th><th>持续时间</th></tr></thead>
              <tbody>
                {["选区", "视图"].map((r) => (
                  <tr key={r}><th>{r}</th><td>1:1.00</td><td>1:1.00</td><td>0:0.00</td></tr>
                ))}
              </tbody>
            </RangeTable>
          </Panel>
        </Stack>
      </Workspace>
      <StatusBar>
        <StatusText>启动用了 5.75 秒</StatusText>
        {[50, 50, 50, 50, 50].map((w, i) => <StatusCell key={i} $w={w} />)}
        <StatusCell $w={80}>2.58 GB 空闲</StatusCell>
        <StatusCell $w={98}>4:22:12.703 空闲</StatusCell>
        <StatusCell $w={48} />
      </StatusBar>
      <DialogShade />
      <OpenDialog />
      <Watermark width="264" height="126" viewBox="0 0 264 126" fill="#bfbfbf">
        <text x="3" y="80" fontFamily="Liberation Sans, sans-serif" fontWeight="700" fontSize="56" stroke="#bfbfbf" strokeWidth="2">Bai</text>
        <ellipse cx="101" cy="32" rx="9.500" ry="12.500" />
        <ellipse cx="119" cy="14" rx="9" ry="13" />
        <ellipse cx="142" cy="16" rx="10" ry="12.500" transform="rotate(8 142 16)" />
        <ellipse cx="156" cy="38" rx="9.500" ry="12" />
        <path d="M129 34c8 0 12 5 15 10 5 8 17 13 17 24 0 10-7 14-14 14-7 0-11-2-18-2s-10 2-17 2c-8 0-15-5-15-14 0-11 11-16 17-24 4-6 7-10 15-10z" />
        <text x="107" y="75" fontFamily="Liberation Sans, sans-serif" fontWeight="700" fontSize="34" fill="#232323">du</text>
        <text x="169" y="78" fontFamily="Noto Sans CJK SC, sans-serif" fontWeight="900" fontSize="44">经验</text>
        <text x="5" y="114" fontFamily="Noto Sans, sans-serif" fontWeight="500" fontSize="29" fill="#d6d6d6">jingyan.baidu.com</text>
      </Watermark>
    </Shell>
  );
}
